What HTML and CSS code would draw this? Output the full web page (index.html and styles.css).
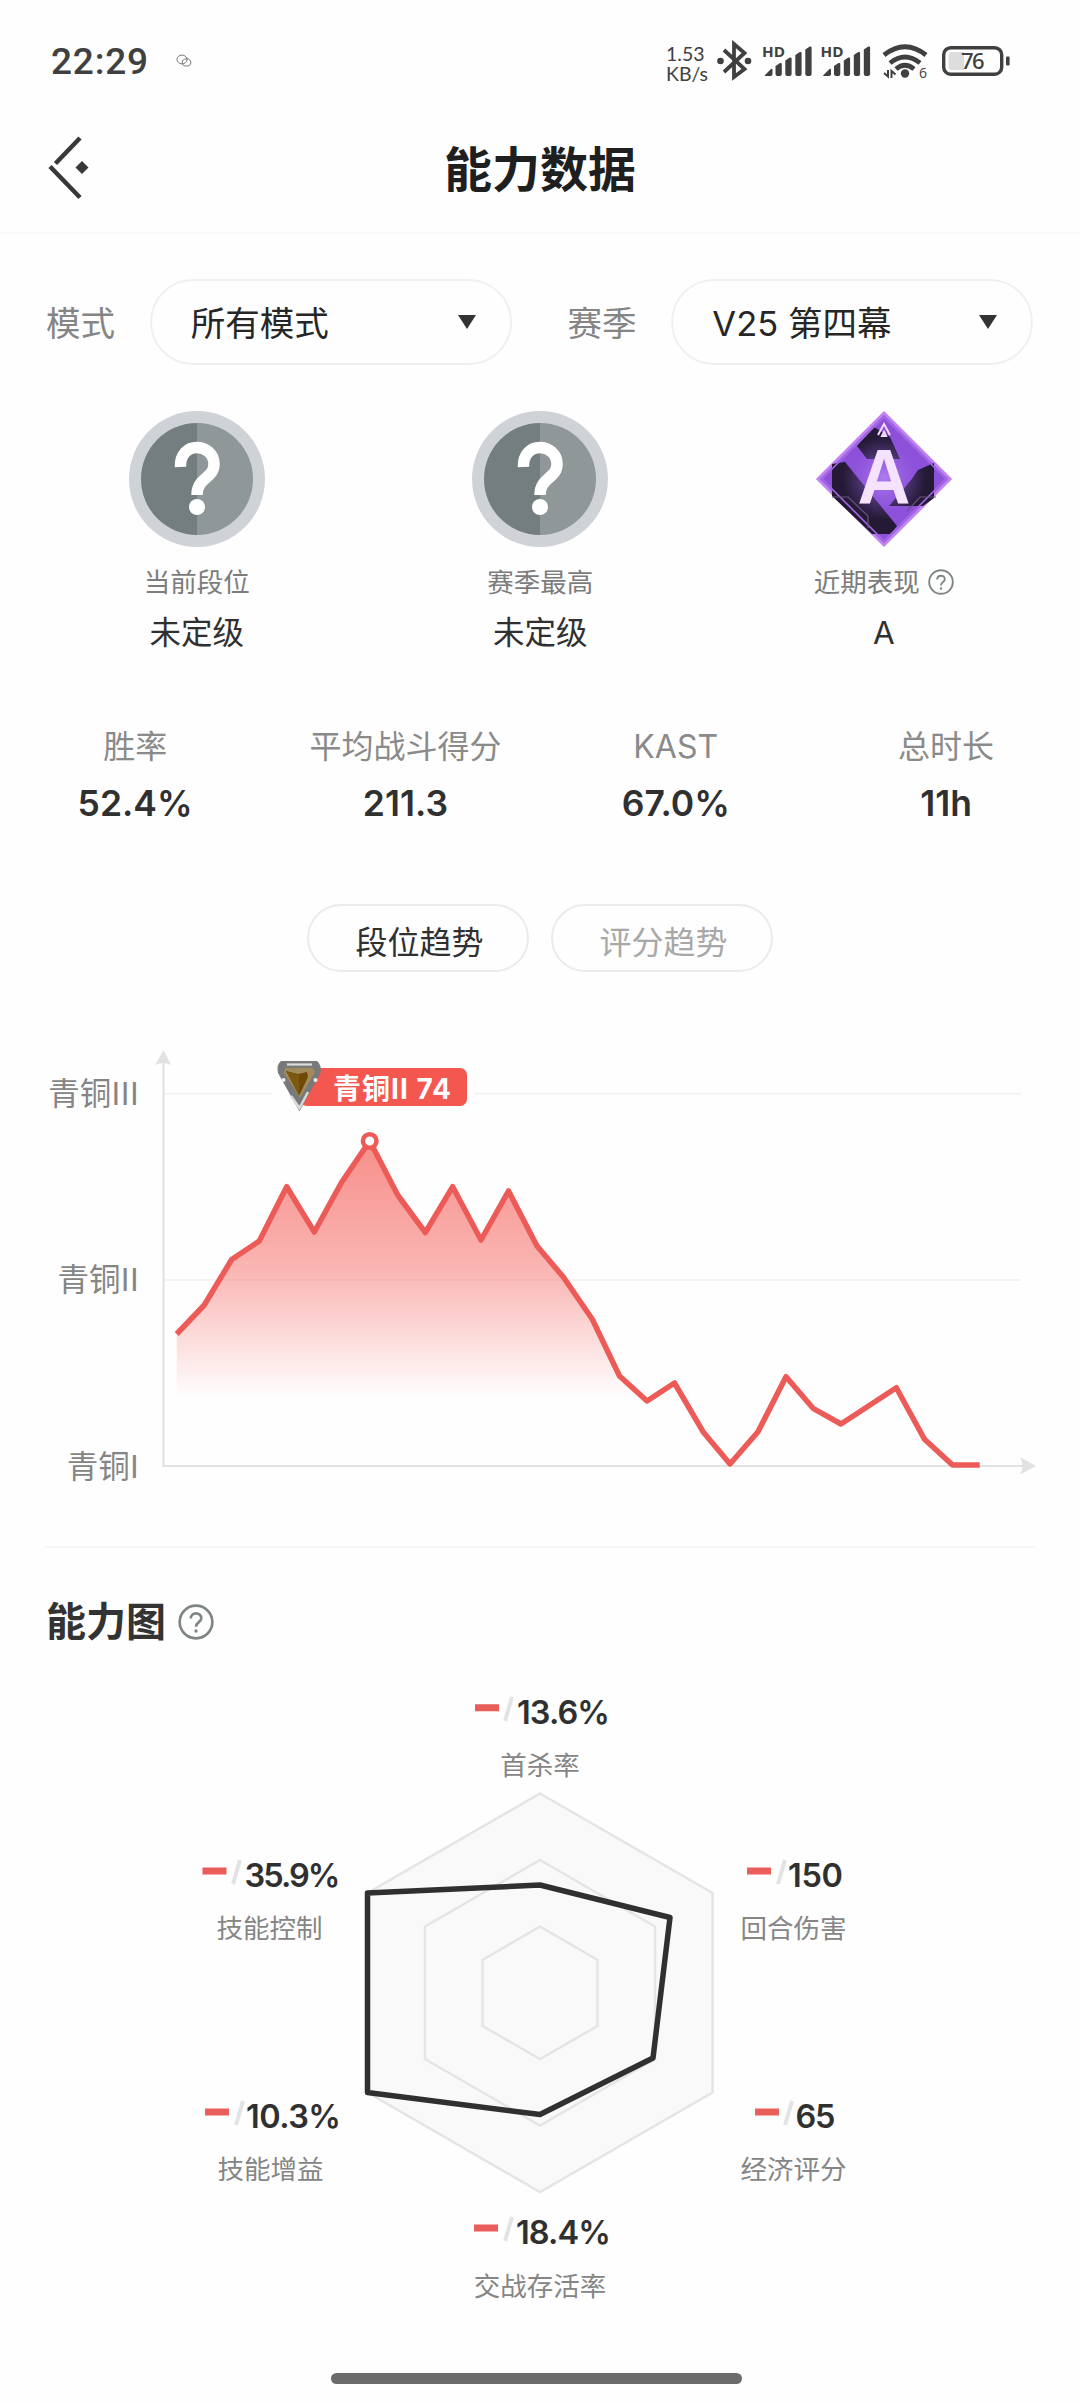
FILE: index.html
```html
<!DOCTYPE html>
<html lang="zh-CN">
<head>
<meta charset="utf-8">
<title>能力数据</title>
<link rel="stylesheet" href="styles.css">
</head>
<body>
<div class="screen">
  <header class="status">
    <span class="time">22:29</span>
    <svg class="chat" width="16" height="16" viewBox="0 0 16 16"><ellipse cx="6" cy="6.500" rx="5" ry="4.400"/><ellipse cx="10.500" cy="9.500" rx="4.300" ry="3.600"/><path d="M10 5.500l1.500-.7"/></svg>
    <div class="net"><span>1.53</span><span>KB/s</span></div>
    <svg class="sysicons" width="300" height="44" viewBox="713 40 300 44">
      <path class="bt" d="M724 50L744.500 69L734 77V44L744.500 53L724 72"/>
      <circle cx="720.500" cy="61" r="3.300"/><circle cx="748" cy="61" r="3.300"/>
      <g id="sig">
        <text class="hd" x="762" y="57" textLength="23" lengthAdjust="spacingAndGlyphs">HD</text>
        <path d="M765 75l6-6q1.500-1 1.500 1v4q0 2-2 2h-4q-3 0-1.500-1zM775.500 66l4.500-3q1.800-.5 1.800 1V74q0 2-2 2h-2.300q-2 0-2-2zM785.300 60.500l4.500-3q1.800-.5 1.800 1V74q0 2-2 2h-2.300q-2 0-2-2zM795.300 55l4.500-3q1.800-.5 1.800 1V74q0 2-2 2h-2.300q-2 0-2-2zM805.300 49.500l4.500-3q1.800-.5 1.800 1V74q0 2-2 2h-2.300q-2 0-2-2z"/>
      </g>
      <use href="#sig" x="58.500"/>
      <g class="wifi"><path d="M884 55Q905 38.500 926 55"/><path d="M890 63Q905 51 920 63"/><path d="M896 69Q905 61.500 914 69"/></g>
      <circle cx="905" cy="73.500" r="4.200"/>
      <path class="arr" d="M888 70v6.500l-4-3.500M891.500 78v-7l4 3.500"/>
      <text class="six" x="919" y="78">6</text>
      <rect x="943.700" y="47.700" width="58" height="26.500" rx="7" class="cell"/>
      <path d="M952 52h12v18h-12q-3.500 0-3.500-3.500v-11Q948.500 52 952 52z" fill="#ddd"/>
      <rect x="1006" y="56.500" width="3.600" height="9" rx="1"/>
      <text class="pct" x="961" y="69.300" textLength="23.500">76</text>
    </svg>
  </header>

  <nav class="titlebar">
    <svg class="back" width="44" height="66" viewBox="46 135 44 66"><path d="M80 139L55.500 164.500M50 167.500L80 198.500" /><path class="dot" d="M82 162l6.500 6.500L82 175l-6.500-6.500z"/></svg>
    <h1>能力数据</h1>
  </nav>

  <section class="filters">
    <label>模式</label><div class="select"><span>所有模式</span><i></i></div>
    <label>赛季</label><div class="select"><span>V25 第四幕</span><i></i></div>
  </section>

  <section class="ranks">
    <div class="rank">
      <svg width="138" height="138" viewBox="0 0 138 138"><g id="unranked"><circle cx="69" cy="69" r="68" fill="#cfd3d7"/><path d="M69 13a56 56 0 0 0 0 112z" fill="#747d7f"/><path d="M69 13a56 56 0 0 1 0 112z" fill="#909799"/><path d="M52.500 57C51.500 30 86 33 86 54C86 69 69 67 69 85" fill="none" stroke="#fff" stroke-width="11.500"/><circle cx="69" cy="97" r="8" fill="#fff"/></g></svg>
      <div class="cap">当前段位</div><div class="val">未定级</div>
    </div>
    <div class="rank">
      <svg width="138" height="138" viewBox="0 0 138 138"><use href="#unranked"/></svg>
      <div class="cap">赛季最高</div><div class="val">未定级</div>
    </div>
    <div class="rank">
      <svg width="138" height="138" viewBox="0 0 138 138">
        <defs><radialGradient id="glow"><stop offset="0" stop-color="#b98cf6" stop-opacity=".75"/><stop offset="1" stop-color="#8a4fd8" stop-opacity="0"/></radialGradient></defs>
        <path d="M69 3L135 69L69 135L3 69z" fill="#8c50d9" stroke="#c183f3" stroke-width="3"/>
        <path d="M59 17L75 27L85 49H52L42 36zM17 54L30 52L82 116L76 124H57L17 86zM119 53V88L108 96H74L96 70L103 60z" fill="#241a36"/>
        <circle cx="69" cy="68" r="42" fill="url(#glow)"/>
        <path d="M69 7L131 69L69 131L7 69z" fill="none" stroke="#a76be8" stroke-width="1.500"/>
        <path d="M17 87H33L53 106V118M121 87H105L92 101" fill="none" stroke="#67547b" stroke-width="1.200"/>
        <path d="M63 25L69 14L75 25M67 26L69 22L71 26z" fill="none" stroke="#f1dcff" stroke-width="2"/>
        <text class="grade" x="69" y="94" text-anchor="middle" textLength="53" lengthAdjust="spacingAndGlyphs">A</text>
      </svg>
      <div class="cap">近期表现<svg class="help" width="26" height="26" viewBox="0 0 26 26"><circle cx="13" cy="13" r="11.800"/><path d="M9.200 10.500C9.200 5.500 16.800 5.500 16.800 10.300C16.800 13.200 13 13 13 16.500"/><circle class="pt" cx="13" cy="19.500" r="1.200"/></svg></div><div class="val">A</div>
    </div>
  </section>

  <section class="stats">
    <div><span>胜率</span><b>52.4%</b></div>
    <div><span>平均战斗得分</span><b>211.3</b></div>
    <div><span>KAST</span><b>67.0%</b></div>
    <div><span>总时长</span><b>11h</b></div>
  </section>

  <section class="tabs"><button class="tab on">段位趋势</button><button class="tab">评分趋势</button></section>

  <svg class="trend" width="1080" height="460" viewBox="0 1030 1080 460">
    <defs><linearGradient id="fade" gradientUnits="userSpaceOnUse" x1="0" y1="1141" x2="0" y2="1398"><stop offset="0" stop-color="#f4554f" stop-opacity=".66"/><stop offset=".5" stop-color="#f4554f" stop-opacity=".43"/><stop offset="1" stop-color="#f4554f" stop-opacity="0"/></linearGradient></defs>
    <path d="M164 1093.700H272M474 1093.700H1021M164 1280H1021" stroke="#f3f3f3" stroke-width="2"/>
    <path d="M163.500 1062V1466H1026" fill="none" stroke="#e2e2e2" stroke-width="2.200"/>
    <path d="M163.500 1050L171 1065Q163.500 1061 155 1065zM1036 1466L1020 1474.500Q1025 1466 1020 1457z" fill="#e2e2e2"/>
    <g class="axis"><text x="139" y="1104.500">青铜III</text><text x="139" y="1291">青铜II</text><text x="139" y="1477.500">青铜I</text></g>
    <path fill="url(#fade)" d="M176.700 1334L204.300 1305L231.700 1259.500L259.300 1241L286.700 1186.700L314.300 1232L342 1181.700L369.700 1141L397.700 1195L425.300 1232.500L452.700 1186.700L481 1240L508.500 1191L537 1246L563.300 1277L592.300 1319.300L619.500 1376L647 1401H176.700z"/>
    <path class="line" d="M176.700 1334L204.300 1305L231.700 1259.500L259.300 1241L286.700 1186.700L314.300 1232L342 1181.700L369.700 1141L397.700 1195L425.300 1232.500L452.700 1186.700L481 1240L508.500 1191L537 1246L563.300 1277L592.300 1319.300L619.500 1376L647 1401L674.500 1383L703 1431.700L730 1464L758 1431.700L786 1376.700L813.500 1408.700L841 1424L896.300 1387.700L924.500 1439.300L952.500 1465H979.700"/>
    <circle cx="369.700" cy="1141" r="6.800" fill="#fff" stroke="#ee5a56" stroke-width="4.500"/>
    <rect x="300" y="1068" width="167" height="38" rx="7" fill="#f35750"/>
    <path d="M281 1061H317Q322 1065 320.500 1073L299.500 1111.500L278 1073Q276 1065 281 1061z" fill="#77797a"/>
    <path d="M287 1064.500H312" stroke="#ddd" stroke-width="2.200"/><path d="M291 1096L299.500 1108L308 1092" fill="none" stroke="#d8dada" stroke-width="2.500"/>
    <path d="M285 1068H313L315 1072L300 1098L284 1073z" fill="#a38a5c"/><path d="M286 1071L298 1074L307 1072L308 1077L299.500 1095z" fill="#6f4905"/><path d="M286 1071L299 1075V1096z" fill="#7d5812"/>
    <circle cx="283.500" cy="1080" r="2" fill="#eee"/><circle cx="315.500" cy="1080" r="2" fill="#eee"/>
    <text class="peak" x="333" y="1098.500" textLength="118">青铜II 74</text>
  </svg>

  <section class="ability">
    <h2>能力图<svg class="help" width="36" height="36" viewBox="0 0 26 26"><circle cx="13" cy="13" r="11.800"/><path d="M9.200 10.500C9.200 5.500 16.800 5.500 16.800 10.300C16.800 13.200 13 13 13 16.500"/><circle class="pt" cx="13" cy="19.500" r="1.200"/></svg></h2>
  </section>

  <svg class="radar" width="1080" height="660" viewBox="0 1670 1080 660">
    <g class="rings"><path d="M540 1793.500L712.500 1893V2092.500L540 2192L367.500 2092.500V1893z"/><path d="M540 1860L655 1926.500V2059L540 2125.500L425 2059V1926.500z"/><path d="M540 1926.500L597.500 1960V2026L540 2059L482.500 2026V1960z"/></g>
    <path class="shape" d="M540 1885L670 1917.500L653 2058L540 2114.500L367.500 2092.500V1893z"/>
    <g class="dash"><path d="M475 1707.700h24M202.500 1871h24M747 1871h24M205 2112h24M755 2112h24M474 2228h24"/></g>
    <g class="slash"><path d="M505 1721l7-24M233 1884l7-24M778 1884l7-24M236 2125l7-24M785 2125l7-24M505 2241l7-24"/></g>
    <g class="num">
      <text x="517" y="1723.500" textLength="93">13.6%</text><text x="244.500" y="1886.500" textLength="96">35.9%</text><text x="788" y="1886.500" textLength="55">150</text>
      <text x="246" y="2127.500" textLength="95">10.3%</text><text x="795.500" y="2127.500" textLength="40">65</text><text x="516" y="2243.500" textLength="95">18.4%</text>
    </g>
    <g class="name">
      <text x="540" y="1775">首杀率</text><text x="269.500" y="1938">技能控制</text><text x="793.500" y="1938">回合伤害</text>
      <text x="270.500" y="2179">技能增益</text><text x="793.500" y="2179">经济评分</text><text x="540" y="2295.500">交战存活率</text>
    </g>
  </svg>
  <div class="home"></div>
</div>
</body>
</html>
```
FILE: styles.css
```css
* { box-sizing: border-box; }
body { margin: 0; background: #fefefe; font-family: Inter, "Noto Sans CJK SC", sans-serif; color: #333; }
.screen { width: 1080px; height: 2403px; display: flex; flex-direction: column; overflow: hidden; }
svg { display: block; flex: none; }
.status { height: 110px; padding: 40px 67px 0 51px; display: flex; align-items: flex-start; color: #404040; }
.time { width: 125px; font: 500 37px/44px Roboto, sans-serif; letter-spacing: .8px; }
.chat { margin-top: 13px; fill: none; stroke: #777; stroke-width: 1; }
.net { margin-left: auto; margin-top: 4px; width: 47px; display: flex; flex-direction: column; font: 19.500px/19.500px Lato, sans-serif; }
.sysicons { fill: #404040; }
.bt, .wifi, .arr { fill: none; stroke: #404040; stroke-width: 3.800; }
.arr { stroke-width: 2; }
.wifi { stroke-width: 4.800; }
.hd { font: 700 15px "Open Sans", sans-serif; }
.six { font: 14px "Open Sans", sans-serif; }
.cell { fill: none; stroke: #404040; stroke-width: 3.400; }
.pct { font: 500 22px "Noto Sans", sans-serif; }
.titlebar { height: 124px; border-bottom: 2px solid #f8f8f8; display: flex; align-items: center; padding: 0 46px 8px; }
.back { fill: none; stroke: #383838; stroke-width: 4.500; }
.back .dot { fill: #383838; stroke: none; }
h1 { flex: 1; margin: 0 44px 0 0; padding-top: 6px; text-align: center; font-size: 48px; line-height: 60px; font-weight: 700; color: #1f1f1f; }
.filters { display: flex; align-items: center; height: 86px; margin: 45px 47px 0 46px; }
.filters label { font-size: 34.500px; line-height: 50px; padding-top: 3px; color: #858585; width: 104px; }
.filters .select + label { margin-left: 56px; }
.select { width: 362px; height: 86px; border: 2px solid #f0f0f0; border-radius: 43px; padding: 0 34px 0 39px; display: flex; align-items: center; justify-content: space-between; font-size: 34.500px; line-height: 50px; color: #262626; }
.select span { padding-top: 3px; }
.select i { border: 9px solid transparent; border-top: 14px solid #333; border-bottom: 0; }
.ranks { margin: 45px 25px 0; display: grid; grid-template-columns: repeat(3, 343.500px); }
.rank { display: flex; flex-direction: column; align-items: center; }
.cap { display: flex; align-items: center; gap: 8px; height: 40px; margin-top: 14px; font-size: 26.500px; line-height: 40px; color: #7c7c7c; }
.val { margin-top: 6px; font-size: 31.500px; line-height: 50px; color: #303030; }
.help { fill: none; stroke: #7f8585; stroke-width: 1.900; }
.help .pt { fill: #7f8585; stroke: none; }
.grade { font: 700 78px "Liberation Sans", sans-serif; fill: #f5e2ff; }
.stats { margin: 64px 0 0; display: grid; grid-template-columns: repeat(4, 270.300px); height: 113px; }
.stats div { display: flex; flex-direction: column; align-items: center; }
.stats span { font-size: 32px; line-height: 50px; color: #8a8a8a; }
.stats b { margin-top: 7px; font: 600 35.500px/50px Inter, sans-serif; color: #303030; }
.tabs { margin-top: 69px; display: flex; justify-content: center; gap: 22px; height: 68px; }
.tab { width: 222px; height: 68px; padding: 3px 0 0 3px; border: 2px solid #ebebeb; border-radius: 34px; background: none; font: 32px/48px "Noto Sans CJK SC", sans-serif; color: #a8a8a8; }
.tab.on { color: #303030; }
.trend { margin-top: 58px; }
.axis { font: 31.500px "Noto Sans CJK SC", sans-serif; fill: #858585; text-anchor: end; }
.line { fill: none; stroke: #ec5b57; stroke-width: 5.500; stroke-linejoin: round; }
.peak { font: 700 28px Inter, "Noto Sans CJK SC", sans-serif; fill: #fff; }
.ability { margin: 56px 45px 0; border-top: 2px solid #f6f6f6; height: 124px; padding: 44px 0 0 1px; }
h2 { margin: 0; display: flex; align-items: center; gap: 12px; font-size: 40px; line-height: 60px; font-weight: 700; color: #333; }
.rings { fill: #f9f9f9; stroke: #e5e5e5; stroke-width: 2.500; }
.shape { fill: none; stroke: #303030; stroke-width: 5.500; stroke-linejoin: round; }
.dash { stroke: #e95d5a; stroke-width: 7; }
.slash { stroke: #e3e3e3; stroke-width: 4; fill: none; }
.num { font: 600 32.500px Inter, sans-serif; fill: #303030; }
.name { font: 26.500px "Noto Sans CJK SC", sans-serif; fill: #858585; text-anchor: middle; }
.home { margin: 43px 0 0 331px; width: 411px; height: 11px; border-radius: 6px; background: #6b6b6b; flex: none; }
```
